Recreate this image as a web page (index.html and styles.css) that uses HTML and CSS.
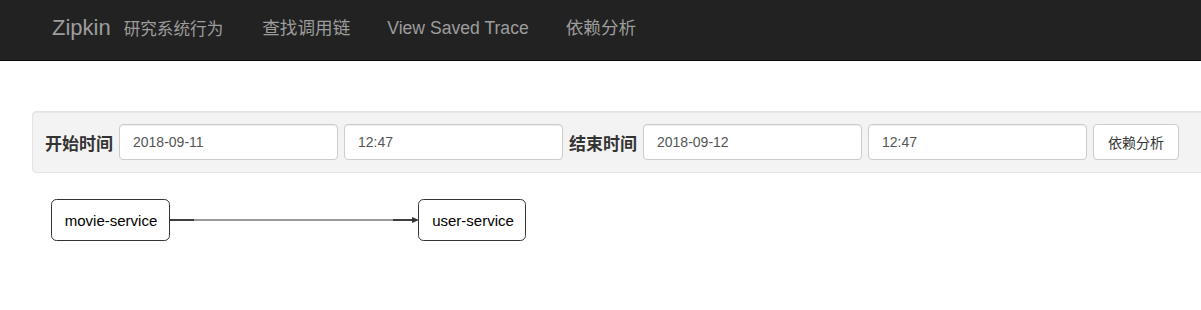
FILE: index.html
```html
<!DOCTYPE html>
<html lang="zh">
<head>
<meta charset="utf-8">
<title>Zipkin</title>
<link rel="stylesheet" href="styles.css">
</head>
<body>
<nav class="navbar">
  <div class="brand"><span class="brand-name">Zipkin</span><span class="brand-sub">研究系统行为</span></div>
  <ul class="nav-links">
    <li class="nav-link first">查找调用链</li>
    <li class="nav-link">View Saved Trace</li>
    <li class="nav-link">依赖分析</li>
  </ul>
</nav>
<main class="content">
  <form class="well">
    <label class="field-label">开始时间</label>
    <input class="form-control" type="text" value="2018-09-11">
    <input class="form-control" type="text" value="12:47">
    <label class="field-label">结束时间</label>
    <input class="form-control" type="text" value="2018-09-12">
    <input class="form-control" type="text" value="12:47">
    <button class="btn" type="button">依赖分析</button>
  </form>
  <div class="graph">
    <svg class="graph-svg" width="600" height="80" viewBox="0 0 600 80">
      <g transform="translate(-40,-190)">
        <line x1="169" y1="220" x2="413" y2="220" class="edge-mid"/>
        <line x1="169" y1="220" x2="194" y2="220" class="edge-end"/>
        <line x1="393" y1="220" x2="413" y2="220" class="edge-end"/>
        <polygon points="412,217 419,220 412,223" class="arrow"/>
        <rect x="51.5" y="199.5" width="118" height="41" rx="5" ry="5" class="node"/>
        <text x="111" y="226" class="node-label">movie-service</text>
        <rect x="418.5" y="199.5" width="107" height="41" rx="5" ry="5" class="node"/>
        <text x="473" y="226" class="node-label">user-service</text>
      </g>
    </svg>
  </div>
</main>
</body>
</html>
```

FILE: styles.css
```css
html, body {
  margin: 0;
  padding: 0;
  background: #fff;
  overflow: hidden;
}
body {
  font-family: "Liberation Sans", Arial, "Noto Sans CJK SC", sans-serif;
  font-size: 14px;
  color: #333;
  width: 1201px;
  height: 310px;
}
.navbar {
  display: flex;
  align-items: center;
  height: 60px;
  background: #222;
  border-bottom: 1px solid #080808;
  box-sizing: content-box;
}
.brand {
  display: flex;
  align-items: baseline;
  padding-left: 52px;
  color: #9d9d9d;
  margin-top: -5px;
}
.brand-name {
  font-size: 22px;
  line-height: 26px;
}
.brand-sub {
  font-size: 16.6px;
  margin-left: 13px;
  font-family: "Noto Sans CJK SC", sans-serif;
}
.nav-links {
  display: flex;
  list-style: none;
  margin: 0;
  padding: 0;
  margin-top: -5px;
}
.nav-link {
  color: #9d9d9d;
  font-size: 17.6px;
  line-height: 24px;
  margin-left: 37px;
}
.nav-link.first {
  margin-left: 39px;
}
.content {
  padding: 50px 0 0 32px;
}
.well {
  display: flex;
  align-items: center;
  gap: 6px;
  margin: 0 -20px 0 0;
  padding: 12px 12px;
  height: 36px;
  background: #f3f3f3;
  border: 1px solid #e3e3e3;
  border-radius: 4px;
  box-shadow: inset 0 1px 1px rgba(0,0,0,.05);
}
.field-label {
  font-family: "Liberation Sans", "Noto Sans CJK SC", sans-serif;
  font-weight: bold;
  font-size: 17px;
  color: #333;
}
.form-control {
  box-sizing: border-box;
  width: 219px;
  height: 36px;
  padding: 0 13px;
  font-family: "Liberation Sans", Arial, sans-serif;
  font-size: 14px;
  color: #555;
  background: #fff;
  border: 1px solid #ccc;
  border-radius: 4px;
  box-shadow: inset 0 1px 1px rgba(0,0,0,.075);
  outline: none;
}
.btn {
  box-sizing: border-box;
  height: 36px;
  padding: 0 14px;
  font-family: "Noto Sans CJK SC", sans-serif;
  font-size: 14px;
  color: #333;
  background: #fff;
  border: 1px solid #ccc;
  border-radius: 4px;
}
.graph {
  margin: 17px 0 0 8px;
  height: 80px;
}
.graph-svg {
  display: block;
}
.node {
  fill: #fff;
  stroke: #333;
  stroke-width: 1;
}
.node-label {
  font-family: "Liberation Sans", Arial, sans-serif;
  font-size: 15px;
  fill: #000;
  text-anchor: middle;
}
.edge-mid {
  stroke: #777;
  stroke-width: 1.5;
}
.edge-end {
  stroke: #333;
  stroke-width: 1.8;
}
.arrow {
  fill: #333;
}
```
